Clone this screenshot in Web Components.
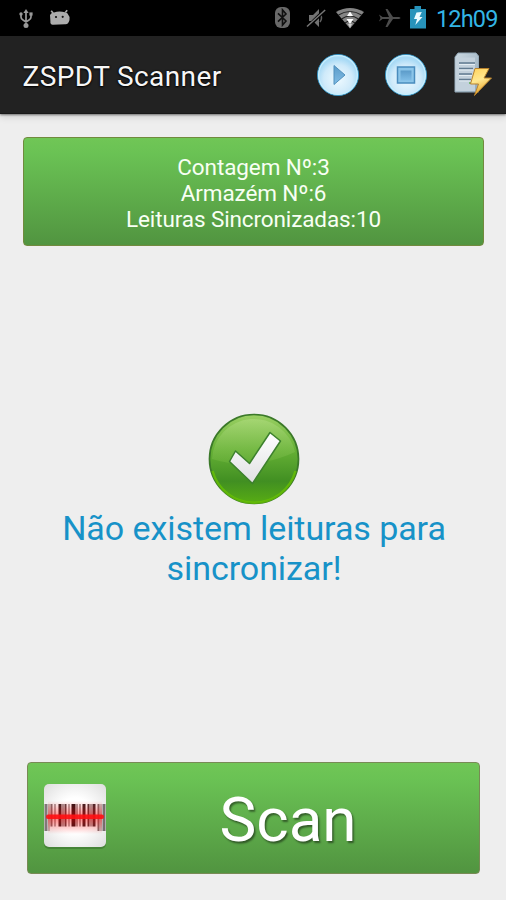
<!DOCTYPE html>
<html lang="pt">
<head>
<meta charset="utf-8">
<title>ZSPDT Scanner</title>
<style>
html,body{margin:0;height:100%}
body{background:#eee;font-family:Roboto,"Liberation Sans",sans-serif;overflow:hidden}
</style>
</head>
<body>
<scanner-app></scanner-app>
<script>
const define = (name, css, html) => customElements.define(name, class extends HTMLElement {
  constructor() {
    super();
    this.attachShadow({mode: 'open'}).innerHTML = `<style>*{box-sizing:border-box}svg{display:block;overflow:visible}${css}</style>${html}`;
  }
});

define('status-bar', `
:host{display:flex;height:36px;background:#000;padding:0 8px 0 19px;align-items:flex-start}
svg{flex:none}
.grow{flex:1}
.clock{font-size:23.5px;line-height:28px;margin:5px 0 0 10px;color:#33b5e5;letter-spacing:-.85px;width:62px;white-space:nowrap}
`, `
<svg style="margin-top:9px" width="14" height="19" viewBox="0 0 14 19" fill="none" stroke="#999" stroke-width="1.7"><path d="M7 2V17M2 5V8Q2 10 4 11L7 13L10 11Q12 10 12 8V5"/><path d="M7 0L9.6 4H4.4Z" fill="#999" stroke="none"/><circle cx="7" cy="16.4" r="2.5" fill="#999" stroke="none"/><circle cx="2" cy="5" r="1.7" fill="#999" stroke="none"/><path d="M10.4 3.4h3.2v3.2h-3.2z" fill="#999" stroke="none"/></svg>
<svg style="margin:10px 0 0 17px" width="20" height="15" viewBox="0 0 20 15"><path d="M1.2 .8L3.2 3.2M15.300 2.500L17.200 .2" fill="none" stroke="#aaa" stroke-width="1.700"/><path d="M0 5Q1 2.500 4 2.500Q9 .800 15 2.300Q18 3 18.400 5Q20.500 7 19.500 10Q19 12 18 13.300Q17 14.500 15 14.300L3 14.800Q0 15 .4 11Z" fill="#adadad"/><circle cx="6" cy="7" r="1.100" fill="#111"/><circle cx="12.700" cy="6.800" r="1.100" fill="#111"/></svg>
<span class="grow"></span>
<svg width="15" height="21" viewBox="0 0 15 21" style="margin-top:7px"><rect x="0" y="0" width="15" height="21" rx="6" fill="#696969"/><path d="M3 6.300L11 14L7.500 18V3L11 7L3 14.700" fill="none" stroke="#101010" stroke-width="1.600"/></svg>
<svg width="20" height="20" viewBox="0 0 20 20" style="margin:8px 0 0 17px"><path d="M2 7H6L12 1V19L6 13H2Z" fill="#727272"/><path d="M13 6Q16 10 13 14" fill="none" stroke="#606060" stroke-width="1.500"/><path d="M1 18.500L18 2" stroke="#000" stroke-width="3.500"/><path d="M0 18.500L18.200 2" stroke="#777" stroke-width="1.500"/></svg>
<svg width="28" height="21" viewBox="0 0 28 21" style="margin:8px 0 0 9px"><path d="M0 4Q14-4 28 4L14 20.500Z" fill="#858585"/><path d="M2.500 7Q14 0 25.500 7M5.500 11Q14 5 22.500 11M9 15Q14 11 19 15" fill="none" stroke="#222" stroke-width="1.100"/><path d="M14 3.500L17 8H11ZM10.500 11H17.500L14 16Z" fill="#fff"/><path d="M12 16H16L14 20Z" fill="#ccc"/></svg>
<svg width="24" height="20" viewBox="0 0 24 20" style="margin:8px 0 0 14px"><path d="M1 6.500L4.500 9H11L7.500 1H9.500L15 9H21Q24 10 21 11H15L9.500 19H7.500L11 11H4.500L1 13.500L2.500 10Z" fill="#4c4c4c"/></svg>
<svg width="16" height="23" viewBox="0 0 16 23" style="margin:6px 0 0 8px"><path d="M4.500 0H11V3H16V22.500H0V3H4.500Z" fill="#2793bb"/><path d="M6.500 6.500L11.800 6L9.500 11H12.500L5.300 19L7 13H4Z" fill="#eafaff"/></svg>
<span class="clock">12h09</span>
`);

define('action-bar', `
:host{display:flex;height:78px;align-items:center;background:#222;padding:0 15px 0 22.5px;position:relative;z-index:1;border-bottom:1px solid #191919;box-shadow:0 1px 2px #0007,0 3px 7px #0002}
.title{flex:1;color:#f6f6f6;font-size:28px;line-height:34px;letter-spacing:.39px;white-space:nowrap;text-shadow:0 1px 2px #000,0 0 2px #000;padding-top:4px}
svg{flex:none}
`, `
<span class="title"><slot></slot></span>
<svg width="42" height="42" viewBox="0 0 42 42"><defs><radialGradient id="g" cy=".6"><stop stop-color="#eefaff"/><stop offset=".7" stop-color="#cfeafa"/><stop offset="1" stop-color="#a9daf5"/></radialGradient><linearGradient id="b" x2="0" y2="1"><stop stop-color="#5b9bc9"/><stop offset="1" stop-color="#80bde6"/></linearGradient></defs><circle cx="21" cy="21" r="20.500" fill="url(#g)" stroke="#3391c1"/><circle cx="21" cy="21" r="19.300" fill="none" stroke="#c8effe" stroke-width="1.300"/><path d="M17 11.500L28 21L17 30.500Z" fill="url(#b)" stroke="#5090bd"/></svg>
<svg width="42" height="42" viewBox="0 0 42 42" style="margin-left:26px"><circle cx="21" cy="21" r="20.500" fill="url(#g)" stroke="#3391c1"/><circle cx="21" cy="21" r="19.300" fill="none" stroke="#c8effe" stroke-width="1.300"/><rect x="12.500" y="13" width="17" height="16" fill="#8bc5e9" stroke="#4a8cbd" stroke-width="1.500"/><rect x="15.500" y="16.500" width="11" height="10" fill="url(#b)"/></svg>
<svg width="38" height="46" viewBox="0 0 38 46" style="margin:0 0 2px 26px"><defs><linearGradient id="s" x2="1" y2="1"><stop stop-color="#cbd8e1"/><stop offset="1" stop-color="#91a8b9"/></linearGradient><linearGradient id="l" x2=".3" y2="1"><stop stop-color="#ffd15a"/><stop offset=".5" stop-color="#ffe891"/><stop offset="1" stop-color="#e9a326"/></linearGradient></defs><path d="M2 6L5 2H23L25.500 5V41H2Z" fill="url(#s)" stroke="#93a8b7"/><path d="M2.500 6.500H22V40H2.500Z" fill="#c3d1dc"/><path d="M6 12H22M6 17.500H20M6 23H19M6 28.500H18" stroke="#627b90" stroke-width="1.700"/><path d="M6 13.500H22M6 19H20M6 24.500H19M6 30H18" stroke="#e4edf2"/><circle cx="17" cy="32" r="1" fill="#5cad52"/><path d="M22 17.500H36L31 27H38.500L21.500 44.500L25.500 33H17.500Z" fill="url(#l)" stroke="#b9832e"/></svg>
`);

define('green-panel', `
:host{display:flex;border:1px solid #718a3e;border-radius:4px;background:linear-gradient(#70c656,#6ac254 15%,#519440);color:#f8fff4}
`, `<slot></slot>`);

define('count-summary', `
green-panel{height:109px;flex-direction:column;align-items:center;padding-top:15.5px;font-size:22.500px;line-height:26px;letter-spacing:-.11px}
`, `<green-panel><span><slot name="count"></slot></span><span><slot name="store"></slot></span><span><slot name="synced"></slot></span></green-panel>`);

define('sync-message', `
:host{display:flex;flex-direction:column;align-items:center}
p{margin:3px 0 0 1px;color:#1792c8;font-size:34px;line-height:40px;letter-spacing:-.07px;text-align:center;white-space:nowrap}
`, `
<svg width="92" height="92" viewBox="0 0 92 92"><defs><linearGradient id="c" x2="0" y2="1"><stop stop-color="#9bd064"/><stop offset=".4" stop-color="#65b035"/><stop offset=".75" stop-color="#418f22"/><stop offset="1" stop-color="#58ad13"/></linearGradient><linearGradient id="h" x2="0" y2="1"><stop stop-color="#b5df86"/><stop offset="1" stop-color="#6eb53c"/></linearGradient><linearGradient id="w" x2="0" y2="1"><stop stop-color="#fff"/><stop offset="1" stop-color="#e0e0e2"/></linearGradient></defs><circle cx="46" cy="46" r="44.500" fill="url(#c)" stroke="#3b7929" stroke-width="1.700"/><path d="M4 46A42 42 0 0 1 87 39Q72 46 56 49Q30 54 4 46Z" fill="url(#h)" opacity=".5"/><path d="M4.500 58A43 43 0 0 0 87.500 58" fill="none" stroke="#6ac400" stroke-width="2.500" opacity=".75"/><path d="M21.500 48.500L27.500 38L41.500 50.500L62 19.500L72.500 28L44.500 70.500Z" fill="url(#w)" stroke="#3d812d" stroke-width="1.500" stroke-linejoin="round"/></svg>
<p><slot></slot></p>
`);

const bars = [[0,3,.55],[4,1,.5],[6,2,.6],[10,1,.7],[14,3,.95],[18,1,.85],[20,2,.8],[24,1,.7],[27,4,1],[32,1,.8],[35,1,.8],[38,3,.95],[43,2,.85],[46,1,.8],[48,3,.9],[53,2,.6],[56,1,.5],[58,3,.6]]
  .map(([x,w,o]) => `<rect x="${x+.5}" y="20" width="${w}" height="${x<6||x>52?27:22.5}" fill="#291518" opacity="${o}"/>`).join('');
define('scan-button', `
green-panel{height:112px;align-items:center;padding-left:16px;border-color:#788a55}
.label{flex:1;text-align:center;font-size:62px;line-height:74px;color:#fff;text-shadow:1.5px 2px 2px #0007;padding:5px 9px 0 0}
.icon{flex:none;margin-bottom:3px}
`, `<green-panel><svg class="icon" width="62" height="64" viewBox="0 0 62 64"><defs><radialGradient id="p" r=".7"><stop offset=".4" stop-color="#fff"/><stop offset="1" stop-color="#dedede"/></radialGradient><linearGradient id="r" x2="0" y2="1"><stop stop-color="#f00" stop-opacity="0"/><stop offset=".5" stop-color="#f00" stop-opacity=".5"/><stop offset="1" stop-color="#f00" stop-opacity="0"/></linearGradient></defs><rect x="0" y="2" width="62" height="63" rx="5" fill="#3d752f" opacity=".65"/><rect width="62" height="63" rx="5" fill="url(#p)"/>${bars}<rect x="4" y="17" width="54" height="33" fill="url(#r)"/><rect x="2" y="30.500" width="58" height="4.500" rx="2" fill="#ff1013" opacity=".9"/></svg><span class="label"><slot></slot></span></green-panel>`);

define('scanner-app', `
:host{display:flex;flex-direction:column;width:506px;height:900px;background:#eee}
main{flex:1;display:flex;flex-direction:column;padding:23px 22px 26.5px 23px}
count-summary,scan-button{display:block}
sync-message{margin:166.5px 0 0 0}
scan-button{margin:auto 4px 0 4px}
`, `<status-bar></status-bar><action-bar>ZSPDT Scanner</action-bar>
<main><count-summary><span slot="count">Contagem Nº:3</span><span slot="store">Armazém Nº:6</span><span slot="synced">Leituras Sincronizadas:10</span></count-summary>
<sync-message>Não existem leituras para<br>sincronizar!</sync-message>
<scan-button>Scan</scan-button></main>`);
</script>
</body>
</html>
